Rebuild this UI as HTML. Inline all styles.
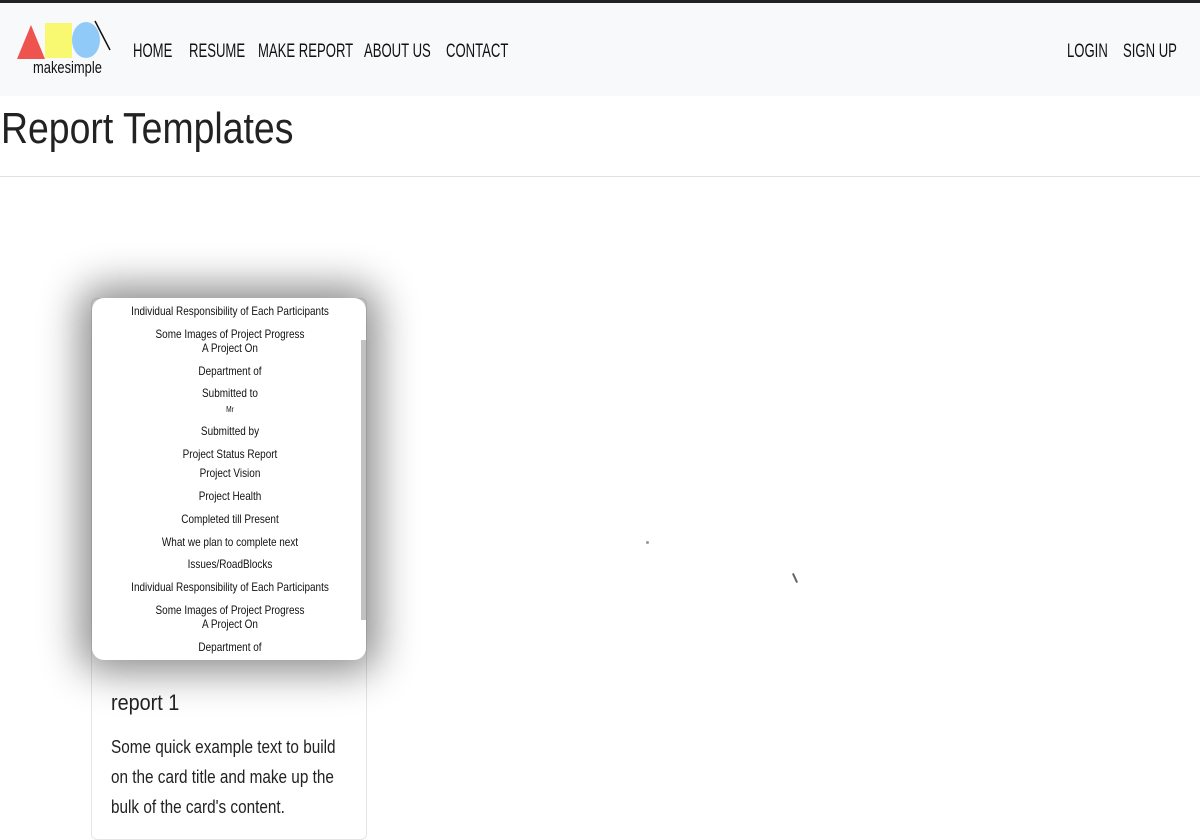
<!DOCTYPE html>
<html><head><style>
body{margin:0;width:1200px;height:800px;overflow:hidden;background:#fff;font-family:"Liberation Sans",sans-serif;position:relative}
.top{position:absolute;left:0;top:0;width:1200px;height:3px;background:#222}
nav{position:absolute;left:0;top:3px;width:1200px;height:93px;background:#f8f9fa}
.n{position:absolute;top:38px;font-size:19px;color:#111;transform:scaleX(.69);transform-origin:left;white-space:nowrap}
h1{position:absolute;left:1px;top:104px;margin:0;font-weight:400;font-size:44px;color:#222;transform:scaleX(.85);transform-origin:left;white-space:nowrap}
.hr{position:absolute;left:0;top:176px;width:1200px;height:1px;background:#e2e2e2}
.card{position:absolute;left:91px;top:298px;width:274px;height:540px;border:1px solid #e5e5e5;border-radius:6px}
.img{position:absolute;left:92px;top:298px;width:274px;height:362px;background:#fff;border-radius:12px;box-shadow:0 0 40px 12px rgba(0,0,0,.45);overflow:hidden}
.l{position:absolute;left:0;width:276px;text-align:center;font-size:12px;color:#111;transform:scaleX(.83);white-space:nowrap}
.sb{position:absolute;left:269px;top:42px;width:5px;height:280px;background:#c1c1c1}
.t{position:absolute;left:111px;font-size:22px;color:#222;transform:scaleX(.9);transform-origin:left;white-space:nowrap}
.p{position:absolute;left:111px;font-size:18px;color:#222;transform:scaleX(.85);transform-origin:left;white-space:nowrap}
</style></head><body>
<div class="top"></div>
<nav>
<div class="n" style="left:133px">HOME</div>
<div class="n" style="left:189px">RESUME</div>
<div class="n" style="left:258px">MAKE REPORT</div>
<div class="n" style="left:364px">ABOUT US</div>
<div class="n" style="left:446px">CONTACT</div>
<div class="n" style="left:1067px">LOGIN</div>
<div class="n" style="left:1123px">SIGN UP</div>
</nav>
<svg style="position:absolute;left:0;top:0" width="120" height="80" viewBox="0 0 120 80">
<polygon points="17,59 31,25 45,59" fill="#ef5350"/>
<rect x="45" y="23" width="27" height="35" fill="#f9f871"/>
<ellipse cx="86" cy="40" rx="14" ry="18" fill="#90caf9"/>
<line x1="95" y1="21" x2="110" y2="50" stroke="#111" stroke-width="1.5"/>
</svg>
<div style="position:absolute;left:33px;top:58px;font-size:17px;color:#111;transform:scaleX(.76);transform-origin:left">makesimple</div>
<h1>Report Templates</h1>
<div class="hr"></div>
<div class="card"></div>
<div class="img">
<div class="sb"></div>
<div class="l" style="top:6px">Individual Responsibility of Each Participants</div>
<div class="l" style="top:29px">Some Images of Project Progress</div>
<div class="l" style="top:43px">A Project On</div>
<div class="l" style="top:66px">Department of</div>
<div class="l" style="top:88px">Submitted to</div>
<div class="l" style="top:107px;font-size:8px">Mr</div>
<div class="l" style="top:126px">Submitted by</div>
<div class="l" style="top:149px">Project Status Report</div>
<div class="l" style="top:168px">Project Vision</div>
<div class="l" style="top:191px">Project Health</div>
<div class="l" style="top:214px">Completed till Present</div>
<div class="l" style="top:237px">What we plan to complete next</div>
<div class="l" style="top:259px">Issues/RoadBlocks</div>
<div class="l" style="top:282px">Individual Responsibility of Each Participants</div>
<div class="l" style="top:305px">Some Images of Project Progress</div>
<div class="l" style="top:319px">A Project On</div>
<div class="l" style="top:342px">Department of</div>
</div>
<div class="t" style="top:690px">report 1</div>
<div class="p" style="top:737px">Some quick example text to build</div>
<div class="p" style="top:767px">on the card title and make up the</div>
<div class="p" style="top:797px">bulk of the card's content.</div>
<div style="position:absolute;left:646px;top:541px;width:3px;height:3px;border-radius:50%;background:#999"></div>
<div style="position:absolute;left:794px;top:573px;width:2px;height:10px;background:#666;transform:rotate(-25deg)"></div>
</body></html>
